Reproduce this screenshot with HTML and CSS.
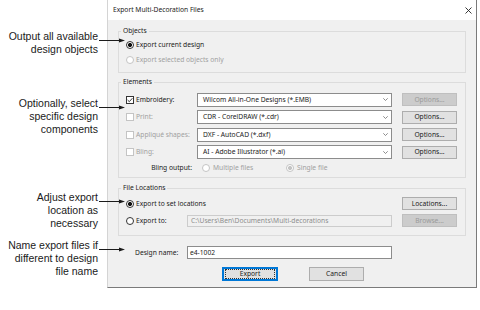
FILE: index.html
```html
<!DOCTYPE html>
<html lang="en">
<head>
    <meta charset="UTF-8">
    <title>Export Multi-Decoration Files</title>
    <link rel="stylesheet" href="styles.css">
</head>
<body>
    <div class="page">
        <div class="notes">
            <div class="note note-objects">
                <p>Output all available<br>design objects</p>
                <svg class="arrow" viewBox="0 0 26 13"><line x1="0" y1="10.5" x2="21" y2="10.5"/><polygon points="20,8.5 26,10.5 20,12.5"/></svg>
            </div>
            <div class="note note-elements">
                <p>Optionally, select<br>specific design<br>components</p>
                <svg class="arrow" viewBox="0 0 26 13"><line x1="0" y1="10.5" x2="21" y2="10.5"/><polygon points="20,8.5 26,10.5 20,12.5"/></svg>
            </div>
            <div class="note note-location">
                <p>Adjust export<br>location as<br>necessary</p>
                <svg class="arrow" viewBox="0 0 26 13"><line x1="0" y1="10.5" x2="21" y2="10.5"/><polygon points="20,8.5 26,10.5 20,12.5"/></svg>
            </div>
            <div class="note note-name">
                <p>Name export files if<br>different to design<br>file name</p>
                <svg class="arrow" viewBox="0 0 26 13"><line x1="0" y1="10.5" x2="21" y2="10.5"/><polygon points="20,8.5 26,10.5 20,12.5"/></svg>
            </div>
        </div>

        <div class="dialog">
            <div class="titlebar">
                <span>Export Multi-Decoration Files</span>
                <svg class="close" viewBox="0 0 7 7"><path d="M0.5 0.5 L6.5 6.5 M6.5 0.5 L0.5 6.5"/></svg>
            </div>

            <div class="dialog-body">
                <fieldset class="group group-objects">
                    <legend>Objects</legend>
                    <div class="row row-obj"><span class="radio on"></span>Export current design</div>
                    <div class="row row-obj off"><span class="radio"></span>Export selected objects only</div>
                </fieldset>

                <fieldset class="group group-elements">
                    <legend>Elements</legend>
                    <div class="row row-el">
                        <span class="cell"><span class="check on"><svg viewBox="0 0 6 6"><path d="M0.6 3 L2.3 4.7 L5.4 1.2"/></svg></span>Embroidery:</span>
                        <span class="combo">Wilcom All-in-One Designs (*.EMB)<svg class="chev" viewBox="0 0 5 3"><path d="M0.3 0.3 L2.5 2.5 L4.7 0.3"/></svg></span>
                        <button class="btn disabled">Options...</button>
                    </div>
                    <div class="row row-el">
                        <span class="cell off"><span class="check"></span>Print:</span>
                        <span class="combo">CDR - CorelDRAW (*.cdr)<svg class="chev" viewBox="0 0 5 3"><path d="M0.3 0.3 L2.5 2.5 L4.7 0.3"/></svg></span>
                        <button class="btn">Options...</button>
                    </div>
                    <div class="row row-el">
                        <span class="cell off"><span class="check"></span>Appliqué shapes:</span>
                        <span class="combo">DXF - AutoCAD (*.dxf)<svg class="chev" viewBox="0 0 5 3"><path d="M0.3 0.3 L2.5 2.5 L4.7 0.3"/></svg></span>
                        <button class="btn">Options...</button>
                    </div>
                    <div class="row row-el">
                        <span class="cell off"><span class="check"></span>Bling:</span>
                        <span class="combo">AI - Adobe Illustrator (*.ai)<svg class="chev" viewBox="0 0 5 3"><path d="M0.3 0.3 L2.5 2.5 L4.7 0.3"/></svg></span>
                        <button class="btn">Options...</button>
                    </div>
                    <div class="row row-bling">
                        <span class="cell cell-right">Bling output:</span>
                        <span class="opt opt-first off"><span class="radio"></span>Multiple files</span>
                        <span class="opt off"><span class="radio on"></span>Single file</span>
                    </div>
                </fieldset>

                <fieldset class="group group-files">
                    <legend>File Locations</legend>
                    <div class="row row-file">
                        <span class="radio on"></span>Export to set locations
                        <button class="btn push">Locations...</button>
                    </div>
                    <div class="row row-file">
                        <span class="cell cell-short"><span class="radio"></span>Export to:</span>
                        <span class="field field-off">C:\Users\Ben\Documents\Multi-decorations</span>
                        <button class="btn disabled">Browse...</button>
                    </div>
                </fieldset>

                <div class="name-row">
                    <span class="name-label">Design name:</span>
                    <span class="field">e4-1002</span>
                </div>

                <div class="actions">
                    <button class="btn btn-default"><span>Export</span></button>
                    <button class="btn">Cancel</button>
                </div>
            </div>
        </div>
    </div>
</body>
</html>
```

FILE: styles.css
```css
body {
    margin: 0;
    background: white;
}

.page {
    display: flex;
    align-items: flex-start;
    width: 480px;
    height: 310px;
}

/* callouts on the left */
.notes {
    width: 107px;
    flex: none;
    position: relative;
    z-index: 1;
    font-family: "Liberation Sans", Arial, sans-serif;
    font-size: 10.5px;
    line-height: 13px;
    color: #1a1a1a;
}

.note {
    display: flex;
    align-items: flex-start;
}

.note p {
    flex: 1;
    margin: 0;
    padding-right: 1px;
    text-align: right;
}

.arrow {
    width: 26px;
    height: 13px;
    flex: none;
    margin-right: -18px;
}

.arrow line {
    stroke: #1a1a1a;
    stroke-width: 1;
}

.arrow polygon {
    fill: #1a1a1a;
}

.note-objects { margin-top: 30px; }
.note-elements { margin-top: 41px; }
.note-location { margin-top: 55px; }
.note-name { margin-top: 9px; }

/* dialog */
.dialog {
    width: 370px;
    height: 288px;
    flex: none;
    box-sizing: border-box;
    border: 1px solid #7a7a7a;
    border-top: none;
    border-left-color: #d4d4d4;
    background: #f0f0f0;
    display: flex;
    flex-direction: column;
    font-family: "Noto Sans", "Liberation Sans", sans-serif;
    font-size: 6.7px;
    line-height: 10px;
    color: #1a1a1a;
}

.titlebar {
    height: 20px;
    flex: none;
    background: white;
    display: flex;
    align-items: center;
    justify-content: space-between;
    padding: 0 4px 0 5px;
}

.close {
    width: 7px;
    height: 7px;
}

.close path {
    stroke: #222;
    stroke-width: 0.9;
    fill: none;
}

.dialog-body {
    flex: 1;
    padding: 6px 10px 0 10px;
}

.group {
    margin: 0;
    padding: 0 8px 0 0;
    border: 1px solid #dcdcdc;
    min-width: 0;
}

.group legend {
    margin-left: 2px;
    padding: 0 2px;
    line-height: 10px;
}

.group-objects { padding-top: 2px; padding-bottom: 5px; }
.group-elements { margin-top: 4px; padding-top: 4px; padding-bottom: 2px; }
.group-files { margin-top: 5px; padding-top: 2px; padding-bottom: 6px; }

.row {
    display: flex;
    align-items: center;
    padding-left: 7px;
}

.row-obj { height: 14px; }
.row-obj.off { height: 15px; }
.row-el { height: 17.5px; }
.row-bling { height: 14px; }
.row-file { height: 17px; }

.off {
    color: #a0a0a0;
}

.cell {
    width: 71px;
    flex: none;
    display: flex;
    align-items: center;
}

.cell-right {
    justify-content: flex-end;
    padding-right: 5px;
    box-sizing: border-box;
}

.cell-short {
    width: 61px;
}

.radio {
    width: 8px;
    height: 8px;
    flex: none;
    box-sizing: border-box;
    border: 1px solid #333;
    border-radius: 50%;
    background: white;
    margin-right: 2px;
}

.radio.on {
    background: radial-gradient(circle, #111 0 1.8px, white 2.3px);
}

.off .radio {
    border-color: #c4c4c4;
}

.off .radio.on {
    background: radial-gradient(circle, #c4c4c4 0 1.8px, white 2.3px);
}

.check {
    width: 8px;
    height: 8px;
    flex: none;
    box-sizing: border-box;
    border: 1px solid #c4c4c4;
    background: white;
    margin-right: 2px;
    display: flex;
}

.check.on {
    border-color: #333;
}

.check svg {
    width: 6px;
    height: 6px;
}

.check path {
    stroke: #222;
    stroke-width: 0.9;
    fill: none;
}

.combo {
    width: 195px;
    height: 14px;
    flex: none;
    box-sizing: border-box;
    border: 1px solid #8c8c8c;
    background: white;
    display: flex;
    align-items: center;
    justify-content: space-between;
    padding: 0 3px 0 5px;
}

.chev {
    width: 5px;
    height: 3px;
}

.chev path {
    stroke: #707070;
    stroke-width: 0.8;
    fill: none;
}

.btn {
    width: 55px;
    height: 13px;
    flex: none;
    box-sizing: border-box;
    border: 1px solid #adadad;
    background: #e1e1e1;
    font: inherit;
    color: #1a1a1a;
    padding: 0;
    margin-left: 10px;
    display: flex;
    align-items: center;
    justify-content: center;
}

.btn.disabled {
    background: #cccccc;
    border-color: #bfbfbf;
    color: #9a9a9a;
}

.btn.push {
    margin-left: auto;
}

.opt {
    display: flex;
    align-items: center;
    width: 84px;
}

.opt-first {
    margin-left: 5px;
}

.opt .radio {
    margin-right: 3px;
}

.field {
    width: 205px;
    height: 13px;
    flex: none;
    box-sizing: border-box;
    border: 1px solid #8c8c8c;
    background: white;
    display: flex;
    align-items: center;
    padding-left: 2px;
}

.field-off {
    height: 12px;
    border-color: #cccccc;
    background: #f0f0f0;
    color: #8d8d8d;
    padding-left: 3px;
}

.name-row {
    display: flex;
    align-items: center;
    margin-top: 10px;
    padding-left: 17px;
}

.name-label {
    width: 52px;
}

.actions {
    display: flex;
    margin-top: 8px;
    padding-left: 104px;
}

.actions .btn {
    height: 14px;
    margin-left: 0;
}

.btn-default {
    width: 56px;
    border-color: #0078d7;
    box-shadow: inset 0 0 0 1px #0078d7;
    margin-right: 31px;
}

.btn-default span {
    display: flex;
    align-items: center;
    justify-content: center;
    width: 48px;
    height: 8px;
    border: 1px dotted #333;
}
```
